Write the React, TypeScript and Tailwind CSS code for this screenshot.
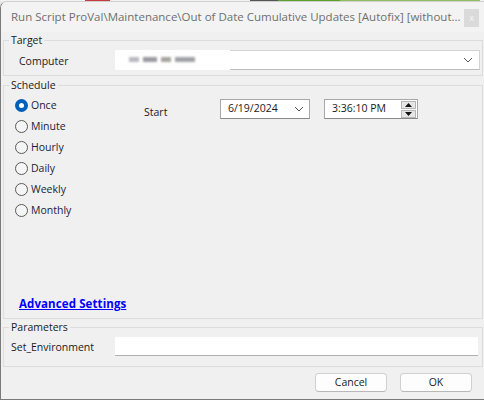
const font = { fontFamily: '"Open Sans", "Noto Sans", sans-serif' };

function Radio({ label, checked = false }: { label: string; checked?: boolean }) {
  return (
    <div className="flex h-[21px] items-center">
      {checked ? (
        <span className="flex h-[13px] w-[13px] items-center justify-center rounded-full bg-[#005fb8]">
          <span className="h-[5px] w-[5px] rounded-full bg-white" />
        </span>
      ) : (
        <span className="h-[13px] w-[13px] rounded-full border border-[#5a5a5a] bg-[#f5f5f5]" />
      )}
      <span className="ml-[3px] text-[#1b1b3a]">{label}</span>
    </div>
  );
}

function Legend({ children }: { children: string }) {
  return <legend className="ml-[5px] px-[2px] leading-[14px] text-[#1a1a1a]">{children}</legend>;
}

export default function App() {
  return (
    <div className="flex h-[400px] w-[484px] flex-col bg-[#e8e8e8] text-[10.5px]" style={font}>
      {/* strip of other windows behind */}
      <div className="flex h-[1px] shrink-0">
        <div className="w-[85px] bg-[#f2f2f2]" />
        <div className="w-[25px] bg-[#c43c3c]" />
        <div className="w-[140px] bg-[#f2f2f2]" />
        <div className="w-[28px] bg-[#555]" />
        <div className="w-[62px] bg-[#5aa02c]" />
        <div className="w-[140px] bg-[#8fbf60]" />
        <div className="flex-1 bg-[#f2f2f2]" />
      </div>

      <div className="flex flex-1 flex-col overflow-hidden rounded-tl-[7px] border-t border-b border-l border-t-[#cfcfcf] border-b-[#7a7a7a] border-l-[#7a7a7a] bg-[#f0f0f0]">
        {/* title bar */}
        <div className="flex h-[30px] shrink-0 items-center bg-[#f3f3f3] pl-[10px] pr-[5px]">
          <span className="flex-1 whitespace-nowrap text-[11.5px] text-[#6f6f6f]">
            Run Script ProVal\Maintenance\Out of Date Cumulative Updates [Autofix] [without...
          </span>
          <span className="mt-[1px] flex h-[18px] w-[15px] items-center justify-center bg-[#dadada] text-[9px] leading-none text-[#f7f7f7]">
            x
          </span>
        </div>

        {/* Target */}
        <fieldset className="ml-[2px] mr-[1px] mt-[1px] border border-[#dcdcdc] pb-[5px] pt-[3px]">
          <Legend>Target</Legend>
          <div className="flex items-center">
            <span className="mt-[3px] w-[111px] pl-[15px] text-[#1a1a1a]">Computer</span>
            <div className="flex h-[20px] flex-1 mr-[2px]">
              <div className="relative w-[115px] bg-white">
                <span className="absolute left-[14px] top-[7px] h-[5px] w-[10px] bg-[#b8b8c0] blur-[1px]" />
                <span className="absolute left-[28px] top-[7px] h-[5px] w-[14px] bg-[#9a9aa0] blur-[1px]" />
                <span className="absolute left-[46px] top-[7px] h-[5px] w-[10px] bg-[#a8a4a0] blur-[1px]" />
                <span className="absolute left-[60px] top-[7px] h-[5px] w-[20px] bg-[#a0a0a8] blur-[1px]" />
              </div>
              <div className="flex flex-1 items-center justify-end border border-l-0 border-[#d4d4d4] border-b-[#bcbcbc] bg-white pr-[6px]">
                <svg width="10" height="6" viewBox="0 0 10 6" fill="none">
                  <path d="M1 1l4 4 4-4" stroke="#555" strokeWidth="1" />
                </svg>
              </div>
            </div>
          </div>
        </fieldset>

        {/* Schedule */}
        <fieldset className="ml-[2px] mr-[1px] mt-[2px] border border-[#dcdcdc] pb-[7px] pt-[3px]">
          <Legend>Schedule</Legend>
          <div className="flex">
            <div className="flex w-[140px] flex-col pl-[11px]">
              <Radio label="Once" checked />
              <Radio label="Minute" />
              <Radio label="Hourly" />
              <Radio label="Daily" />
              <Radio label="Weekly" />
              <Radio label="Monthly" />
            </div>
            <div className="flex h-[20px] items-center mt-[4px]">
              <span className="mt-[7px] w-[76px] text-[#1a1a1a]">Start</span>
              <div className="flex h-[20px] w-[90px] items-center justify-between border border-[#a8a8a8] border-b-[#8a8a8a] bg-white pl-[7px] pr-[5px]">
                <span className="text-[#1a1a1a]">6/19/2024</span>
                <svg width="10" height="6" viewBox="0 0 10 6" fill="none">
                  <path d="M1 1l4 4 4-4" stroke="#555" strokeWidth="1" />
                </svg>
              </div>
              <div className="ml-[14px] flex h-[20px] w-[94px] items-center justify-between border border-[#a8a8a8] border-b-[#8a8a8a] bg-white pl-[7px] pr-[1px]">
                <span className="text-[#1a1a1a]">3:36:10 PM</span>
                <div className="flex flex-col gap-[1px]">
                  <span className="flex h-[8px] w-[15px] items-center justify-center border border-[#b5b5b5] bg-[#e6e6e6]">
                    <svg width="7" height="4" viewBox="0 0 7 4">
                      <path d="M0 4L3.5 0L7 4z" fill="#111" />
                    </svg>
                  </span>
                  <span className="flex h-[8px] w-[15px] items-center justify-center border border-[#b5b5b5] bg-[#e6e6e6]">
                    <svg width="7" height="4" viewBox="0 0 7 4">
                      <path d="M0 0L3.5 4L7 0z" fill="#111" />
                    </svg>
                  </span>
                </div>
              </div>
            </div>
          </div>
          <div className="mt-[76px] h-[14px] pl-[15px] leading-[14px]">
            <a className="text-[11.5px] font-bold tracking-[0.1px] text-[#0000ff] underline">Advanced Settings</a>
          </div>
        </fieldset>

        {/* Parameters */}
        <fieldset className="ml-[2px] mr-[1px] mt-[1px] border border-[#dcdcdc] pb-[10px] pt-[3px]">
          <Legend>Parameters</Legend>
          <div className="flex items-center">
            <span className="mt-[2px] w-[111px] pl-[7px] text-[#1a1a1a]">Set_Environment</span>
            <div className="mr-[4px] h-[19px] flex-1 border-b border-[#b0b0b0] bg-white" />
          </div>
        </fieldset>

        {/* buttons */}
        <div className="mt-[6px] flex justify-end gap-[13px] pr-[12px]">
          <button className="h-[19px] w-[72px] rounded-[4px] border border-[#d0d0d0] border-b-[#b8b8b8] bg-[#fdfdfd] text-[#1a1a1a]">
            Cancel
          </button>
          <button className="h-[19px] w-[72px] rounded-[4px] border border-[#d0d0d0] border-b-[#b8b8b8] bg-[#fdfdfd] text-[#1a1a1a]">
            OK
          </button>
        </div>
      </div>
    </div>
  );
}
